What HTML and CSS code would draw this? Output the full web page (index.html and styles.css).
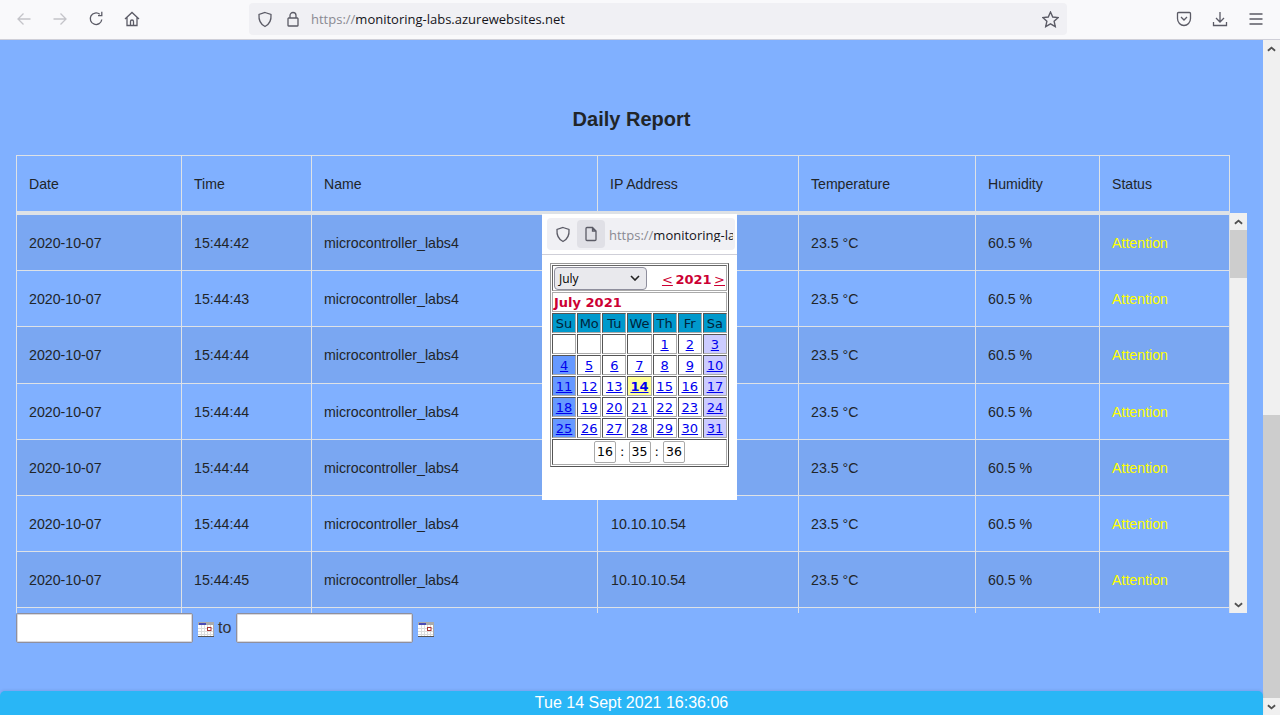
FILE: index.html
```html
<!DOCTYPE html>
<html lang="en">
<head>
<meta charset="utf-8">
<title>Daily Report</title>
<link rel="stylesheet" href="styles.css">
</head>
<body>
<header class="toolbar">
  <nav class="nav-icons">
    <svg class="ico dim" viewBox="0 0 16 16"><path d="M14.5 8H2M7.5 2.5 2 8l5.500 5.500"/></svg>
    <svg class="ico dim" viewBox="0 0 16 16"><path d="M1.500 8H14M8.500 2.500 14 8l-5.500 5.500"/></svg>
    <svg class="ico" viewBox="0 0 16 16"><path d="M13.800 8.500A5.800 5.800 0 1 1 11.800 3.300M13.800 .8V4.600H10"/></svg>
    <svg class="ico" viewBox="0 0 16 16"><path d="M1 8 8 1.500 15 8M3 6.500V14.500H13V6.500M6.500 14.500V10.500A1.500 1.500 0 0 1 9.500 10.500V14.500"/></svg>
  </nav>
  <div class="urlbar">
    <svg class="ico shield" viewBox="0 0 16 16"><path d="M8 1 14 3C14.500 9 12 13 8 15 4 13 1.500 9 2 3Z"/></svg>
    <svg class="ico lock" viewBox="0 0 16 16"><path d="M5 7V4.500A3 3 0 0 1 11 4.500V7M3.500 7H12.500A.8.8 0 0 1 13 7.800V14.200A.8.8 0 0 1 12.500 15H3.500A.8.8 0 0 1 3 14.200V7.800A.8.8 0 0 1 3.500 7Z"/></svg>
    <span class="url"><span class="url-dim">https://</span>monitoring-labs.azurewebsites.net</span>
    <svg class="ico star" viewBox="0 0 16 16"><path d="M8 1 10.100 5.700 15.200 6.200 11.400 9.600 12.500 14.700 8 12.100 3.500 14.700 4.600 9.600 .8 6.200 5.900 5.700Z"/></svg>
  </div>
  <div class="tool-icons">
    <svg class="ico" viewBox="0 0 16 16"><path d="M2.500 1.500H13.500A1 1 0 0 1 14.500 2.500V7.500C14.500 11.500 11.500 14.500 8 14.500S1.500 11.500 1.500 7.500V2.500A1 1 0 0 1 2.500 1.500ZM5 6 8 9 11 6"/></svg>
    <svg class="ico" viewBox="0 0 16 16"><path d="M8 1V10.500M4 7 8 11 12 7M1.500 11V14.500H14.500V11"/></svg>
    <svg class="ico" viewBox="0 0 16 16"><path d="M1.500 3H14.500M1.500 8H14.500M1.500 13H14.500"/></svg>
  </div>
</header>

<div class="viewport">
  <main class="page">
    <h1 class="title">Daily Report</h1>
    <table class="grid head">
      <colgroup><col class="c1"><col class="c2"><col class="c3"><col class="c4"><col class="c5"><col class="c6"><col class="c7"></colgroup>
      <thead><tr><th>Date</th><th>Time</th><th>Name</th><th>IP Address</th><th>Temperature</th><th>Humidity</th><th>Status</th></tr></thead>
    </table>
    <div class="scroller">
      <div class="rows">
        <table class="grid body">
          <colgroup><col class="c1"><col class="c2"><col class="c3"><col class="c4"><col class="c5"><col class="c6"><col class="c7"></colgroup>
          <tbody>
            <tr><td>2020-10-07</td><td>15:44:42</td><td>microcontroller_labs4</td><td class="ip">10.10.10.54</td><td>23.5 °C</td><td>60.5 %</td><td class="status">Attention</td></tr>
            <tr><td>2020-10-07</td><td>15:44:43</td><td>microcontroller_labs4</td><td class="ip">10.10.10.54</td><td>23.5 °C</td><td>60.5 %</td><td class="status">Attention</td></tr>
            <tr><td>2020-10-07</td><td>15:44:44</td><td>microcontroller_labs4</td><td class="ip">10.10.10.54</td><td>23.5 °C</td><td>60.5 %</td><td class="status">Attention</td></tr>
            <tr><td>2020-10-07</td><td>15:44:44</td><td>microcontroller_labs4</td><td class="ip">10.10.10.54</td><td>23.5 °C</td><td>60.5 %</td><td class="status">Attention</td></tr>
            <tr><td>2020-10-07</td><td>15:44:44</td><td>microcontroller_labs4</td><td class="ip">10.10.10.54</td><td>23.5 °C</td><td>60.5 %</td><td class="status">Attention</td></tr>
            <tr><td>2020-10-07</td><td>15:44:44</td><td>microcontroller_labs4</td><td class="ip">10.10.10.54</td><td>23.5 °C</td><td>60.5 %</td><td class="status">Attention</td></tr>
            <tr><td>2020-10-07</td><td>15:44:45</td><td>microcontroller_labs4</td><td class="ip">10.10.10.54</td><td>23.5 °C</td><td>60.5 %</td><td class="status">Attention</td></tr>
            <tr><td></td><td></td><td></td><td></td><td></td><td></td><td></td></tr>
          </tbody>
        </table>
      </div>
      <div class="sbar inner">
        <div class="sbtn"><svg class="chev" viewBox="0 0 10 6"><path d="M1 5 5 1.500 9 5"/></svg></div>
        <div class="thumb inner-thumb"></div>
        <div class="strack"></div>
        <div class="sbtn"><svg class="chev" viewBox="0 0 10 6"><path d="M1 1 5 4.500 9 1"/></svg></div>
      </div>
    </div>
    <div class="range">
      <input class="date" type="text" aria-label="From">
      <svg class="cal" viewBox="0 0 16 15"><rect width="16" height="15" fill="#555"/><rect width="16" height="14" fill="#aaa"/><rect y="3" width="15" height="11" fill="#fff"/><rect x="1" y="1" width="7" height="2" fill="#4a4ab5"/><path class="cal-grid" d="M3.500 3V14M6.500 3V14M9.500 3V14M12.500 3V14M0 6.500H15M0 9.500H15M0 12.500H15"/><rect x="9.500" y="5.500" width="3.500" height="3" fill="#fff" stroke="#a33"/></svg>
      <span class="to">to</span>
      <input class="date" type="text" aria-label="To">
      <svg class="cal" viewBox="0 0 16 15"><rect width="16" height="15" fill="#555"/><rect width="16" height="14" fill="#aaa"/><rect y="3" width="15" height="11" fill="#fff"/><rect x="1" y="1" width="7" height="2" fill="#4a4ab5"/><path class="cal-grid" d="M3.500 3V14M6.500 3V14M9.500 3V14M12.500 3V14M0 6.500H15M0 9.500H15M0 12.500H15"/><rect x="9.500" y="5.500" width="3.500" height="3" fill="#fff" stroke="#a33"/></svg>
    </div>
    <footer class="footer">Tue 14 Sept 2021 16:36:06</footer>

    <section class="popup">
      <div class="pop-url">
        <svg class="ico pop-shield" viewBox="0 0 16 16"><path d="M8 1 14 3C14.500 9 12 13 8 15 4 13 1.500 9 2 3Z"/></svg>
        <span class="pop-page"><svg class="ico pop-doc" viewBox="0 0 16 16"><path d="M3 2.500A1 1 0 0 1 4 1.500H9.500L13 5V13.500A1 1 0 0 1 12 14.500H4A1 1 0 0 1 3 13.500ZM9.500 1.500V5H13"/></svg></span>
        <span class="pop-link"><span class="url-dim">https://</span>monitoring-la</span>
      </div>
      <table class="calendar">
        <tr><td colspan="7" class="cal-top">
          <div class="cal-controls">
            <span class="month-select"><span class="month-name">July</span><svg class="sel-chev" viewBox="0 0 10 6"><path d="M1 1 5 5 9 1"/></svg></span>
            <span class="year"><a href="#">&lt;</a> 2021 <a href="#">&gt;</a></span>
          </div>
        </td></tr>
        <tr><td colspan="7" class="cal-title">July 2021</td></tr>
        <tr class="dow"><td>Su</td><td>Mo</td><td>Tu</td><td>We</td><td>Th</td><td>Fr</td><td>Sa</td></tr>
        <tr><td></td><td></td><td></td><td></td><td><a href="#">1</a></td><td><a href="#">2</a></td><td class="sat"><a href="#">3</a></td></tr>
        <tr><td class="sun"><a href="#">4</a></td><td><a href="#">5</a></td><td><a href="#">6</a></td><td><a href="#">7</a></td><td><a href="#">8</a></td><td><a href="#">9</a></td><td class="sat"><a href="#">10</a></td></tr>
        <tr><td class="sun"><a href="#">11</a></td><td><a href="#">12</a></td><td><a href="#">13</a></td><td class="today"><a href="#">14</a></td><td><a href="#">15</a></td><td><a href="#">16</a></td><td class="sat"><a href="#">17</a></td></tr>
        <tr><td class="sun"><a href="#">18</a></td><td><a href="#">19</a></td><td><a href="#">20</a></td><td><a href="#">21</a></td><td><a href="#">22</a></td><td><a href="#">23</a></td><td class="sat"><a href="#">24</a></td></tr>
        <tr><td class="sun"><a href="#">25</a></td><td><a href="#">26</a></td><td><a href="#">27</a></td><td><a href="#">28</a></td><td><a href="#">29</a></td><td><a href="#">30</a></td><td class="sat"><a href="#">31</a></td></tr>
        <tr><td colspan="7" class="cal-time"><span class="tbox">16</span><span class="sep">:</span><span class="tbox">35</span><span class="sep">:</span><span class="tbox">36</span></td></tr>
      </table>
    </section>
  </main>
  <div class="sbar outer">
    <div class="sbtn"><svg class="chev" viewBox="0 0 10 6"><path d="M1 5 5 1.500 9 5"/></svg></div>
    <div class="strack outer-gap"></div>
    <div class="thumb outer-thumb"></div>
    <div class="sbtn"><svg class="chev" viewBox="0 0 10 6"><path d="M1 1 5 4.500 9 1"/></svg></div>
  </div>
</div>
</body>
</html>
```

FILE: styles.css
```css
* { box-sizing: border-box; }
html, body { margin: 0; height: 715px; overflow: hidden; }
body { display: flex; flex-direction: column; font-family: "Liberation Sans", Arial, sans-serif; color: #212529; background: #80b0ff; }

.toolbar { height: 40px; flex: none; display: flex; align-items: center; background: #f9f9fb; border-bottom: 1px solid #cfcfd8; padding-bottom: 1px; }
.ico { width: 16px; height: 16px; fill: none; stroke: #5b5b66; stroke-width: 1.300; display: block; flex: none; }
.ico.dim { stroke: #c4c4c9; }
.nav-icons { display: flex; gap: 20px; padding-left: 16px; width: 249px; }
.urlbar { width: 818px; height: 32px; background: #f0f0f4; border-radius: 4px; display: flex; align-items: center; padding-left: 8px; font: 13px/1 "Open Sans", sans-serif; color: #15141a; }
.shield { width: 16px; height: 17px; }
.lock { margin-left: 12px; }
.url { margin-left: 10px; padding-top: 1px; white-space: nowrap; }
.url-dim { color: #8a8a92; }
.star { margin-left: auto; margin-right: 8px; width: 17px; height: 17px; }
.tool-icons { display: flex; gap: 20px; margin-left: 109px; }

.viewport { flex: 1; min-height: 0; display: flex; }
.page { flex: 1; min-width: 0; position: relative; display: flex; flex-direction: column; }
.title { margin: 67px 0 0; height: 48px; text-align: center; font-size: 20px; line-height: 24px; font-weight: 700; }

.grid { border-collapse: separate; border-spacing: 0; table-layout: fixed; width: 1214px; font-size: 14.100px; line-height: 21px; }
.c1 { width: 166px; } .c2 { width: 130px; } .c3 { width: 286px; } .c4 { width: 201px; } .c5 { width: 177px; } .c6 { width: 124px; } .c7 { width: 130px; }
.grid th, .grid td { font-weight: 400; text-align: left; padding: 0 12px; border-right: 1px solid #dee2e6; border-bottom: 1px solid #dee2e6; white-space: nowrap; }
.grid th:first-child, .grid td:first-child { border-left: 1px solid #dee2e6; padding-left: 12px; }
.head { margin-left: 16px; flex: none; }
.head th { height: 58px; border-top: 1px solid #dee2e6; border-bottom: 2px solid #dee2e6; padding-top: 1px; }
.scroller { margin-left: 16px; width: 1231px; height: 400px; flex: none; display: flex; }
.rows { width: 1214px; overflow: hidden; border-top: 2px solid #dee2e6; }
.body { font-size: 14.200px; }
.grid.body td { height: 56.200px; padding-top: 2px; }
.grid.body .ip { padding-left: 13px; }
.body tr:nth-child(odd) td { background: #7aa7f2; }
.body .status { color: #ff0; }

.sbar { width: 17px; flex: none; display: flex; flex-direction: column; background: #f0f0f0; }
.sbtn { height: 17px; flex: none; display: flex; align-items: center; justify-content: center; }
.chev { width: 9px; height: 6px; fill: none; stroke: #505050; stroke-width: 2; }
.thumb { background: #cdcdcd; flex: none; }
.strack { flex: 1; }
.inner-thumb { height: 48px; }
.outer-gap { flex: none; height: 358px; }
.outer-thumb { flex: 1; }

.range { margin-left: 16px; height: 30px; display: flex; align-items: center; flex: none; font-size: 16px; }
.date { width: 177px; height: 30px; border: 1px solid #8f8f9d; box-shadow: inset 0 0 0 1px rgba(143,143,157,.35); border-radius: 2px; background: #fff; padding: 0; margin: 0; outline: none; }
.cal { width: 16px; height: 15px; margin: 2px 0 0 5px; flex: none; }
.cal-grid { stroke: #ddd; stroke-width: 1; fill: none; }
.to { margin: 0 4px 0 4px; width: 14px; color: #333; }
.footer { margin-top: auto; height: 24px; flex: none; background: #29b6f6; border-radius: 5px 5px 0 0; box-shadow: 0 -1px 3px rgba(0,0,0,.08); color: #fff; text-align: center; font-size: 16px; line-height: 24px; }

.popup { position: absolute; left: 542px; top: 174px; width: 195px; height: 286px; background: #fff; padding: 4px 2px 0 5px; }
.pop-url { height: 32px; width: 188px; background: #f0f0f4; border-radius: 4px; display: flex; align-items: center; white-space: nowrap; padding-left: 8px; font: 13px/1 "Open Sans", sans-serif; color: #15141a; }
.pop-shield { width: 16px; height: 17px; }
.pop-page { width: 28px; height: 28px; background: #e0e0e6; border-radius: 4px; margin-left: 6px; display: flex; align-items: center; justify-content: center; flex: none; }
.pop-link { margin-left: 4px; padding-top: 2px; width: 124px; overflow: hidden; }
.popup::before { content: ""; position: absolute; left: 0; right: 0; top: 40px; border-top: 1px solid #cfcfd8; }

.calendar { margin: 13px 0 0 3px; width: 179px; border-collapse: separate; border-spacing: 1px; border: 1px solid; border-color: #999 #555 #555 #999; font: 13px/16px "DejaVu Sans", Verdana, sans-serif; table-layout: fixed; background: #fff; }
.calendar td { border: 1px solid; border-color: #555 #aaa #aaa #555; padding: 1px 0 0; height: 20px; text-align: center; background: #fff; }
.calendar a { color: #0000ee; }
.calendar .cal-top { height: 26px; padding: 0 1px; border-color: #666 #aaa #aaa #666; }
.cal-controls { display: flex; justify-content: space-between; align-items: center; }
.month-select { width: 93px; height: 23px; background: #e9e9ed; border: 1px solid #8f8f9d; border-radius: 4px; display: flex; align-items: center; justify-content: space-between; padding: 0 6px 0 4px; font: 12px/1 "Open Sans", sans-serif; color: #000; }
.month-name { padding-top: 1px; }
.sel-chev { width: 10px; height: 6px; fill: none; stroke: #222; stroke-width: 1.600; }
.year { color: #cc0033; font-weight: 700; word-spacing: -2px; padding-top: 3px; }
.year a { color: #cc0033; font-weight: 400; }
.calendar .cal-title { color: #cc0033; font-weight: 700; text-align: left; padding-left: 1px; border-color: #aaa; }
.dow td { background: #0099cc; color: #00233a; }
.calendar .sun { background: #6699ff; }
.calendar .sat { background: #ccccff; }
.calendar .today { background: #ffff99; font-weight: 700; }
.calendar .cal-time { height: 26px; padding: 0; }
.tbox { display: inline-block; width: 22px; height: 22px; line-height: 20px; border: 1px solid #aaa; border-radius: 2px; vertical-align: middle; color: #000; font-size: 12.500px; }
.sep { display: inline-block; width: 12.500px; color: #000; }
```
